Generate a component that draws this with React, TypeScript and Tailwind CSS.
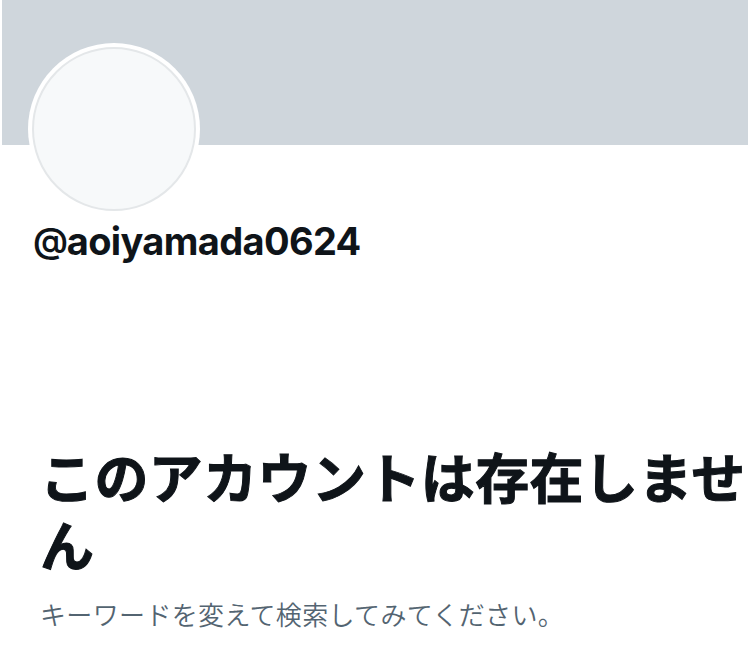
export default function App() {
    return (
        <div className="h-[664px] w-[750px] overflow-hidden bg-white font-['Inter','Noto_Sans_CJK_JP',sans-serif] text-[#0f1419]">
            {/* Banner */}
            <div className="mx-0.5 h-[145px] bg-[#cfd6dc]" />

            {/* Profile */}
            <div className="-mt-[102px] px-7">
                <div className="relative size-[172px] rounded-full bg-white p-1">
                    <div className="size-full rounded-full border-2 border-[#e4e7e9] bg-[#f7f9fa]" />
                </div>
                <h2 className="mt-0.5 ml-[5px] text-[38px] leading-[48px] font-bold tracking-[-0.65px]">
                    <span className="inline-block -translate-y-0.5 text-[35px] leading-none font-semibold tracking-[-1.2px]">
                        @
                    </span>
                    aoiyamada0624
                </h2>
            </div>

            {/* Empty state */}
            <div className="mt-[181px] pl-10">
                <h1 className="w-[710px] text-[54px] leading-[68px] font-bold tracking-[0.4px] break-all [-webkit-text-stroke:1px_#0f1419]">
                    このアカウントは存在しません
                </h1>
                <p className="mt-[17px] text-[26px] leading-[34px] font-[350] tracking-[0.35px] text-[#536471]">
                    キーワードを変えて検索してみてください。
                </p>
            </div>
        </div>
    );
}
